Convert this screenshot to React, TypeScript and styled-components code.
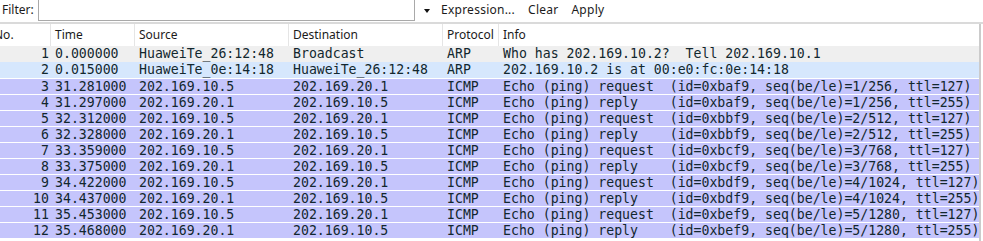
import React from "react";
import styled, { createGlobalStyle } from "styled-components";

const Global = createGlobalStyle`
  html, body { margin: 0; padding: 0; background: #ffffff; }
  body { width: 983px; height: 241px; overflow: hidden; }
`;

const Page = styled.div`
  width: 983px;
  height: 241px;
  overflow: hidden;
  background: #fff;
  font-family: "Noto Sans", "Open Sans", sans-serif;
`;

const Toolbar = styled.div`
  height: 22px;
  display: flex;
  align-items: flex-start;
  border-bottom: 2px solid #dadada;
  font-size: 12px;
  color: #1b1b1b;
`;

const Label = styled.span`
  margin-left: 2px;
  line-height: 19px;
  width: 36px;
`;

const FilterInput = styled.div`
  width: 375px;
  height: 20px;
  border: 1px solid #a9a9a9;
  border-top: none;
  background: #fff;
`;

const Arrow = styled.span`
  margin: 9px 0 0 9px;
  width: 0;
  height: 0;
  border-left: 3.5px solid transparent;
  border-right: 3.5px solid transparent;
  border-top: 4px solid #111;
`;

const ToolButton = styled.span<{ $ml: number }>`
  margin-left: ${(p) => p.$ml}px;
  line-height: 19px;
  letter-spacing: 0.25px;
`;

const Table = styled.div`
  width: 979px;
  border-right: 2px solid #cbcbcb;
  height: 217px;
  overflow: hidden;
`;

const cols = "51px 84px 154px 154px 56px 480px";

const HeaderRow = styled.div`
  display: grid;
  grid-template-columns: ${cols};
  height: 22px;
  background: #fff;
`;

const HeaderCell = styled.div`
  border-right: 1px solid #e5e5e5;
  padding-left: 4px;
  font-size: 12px;
  line-height: 21px;
  color: #1b1b1b;
  white-space: nowrap;
  &:first-child { padding-left: 0; text-indent: -6px; }
  &:last-child { border-right: none; }
`;

const Row = styled.div<{ $bg: string; $sep: boolean }>`
  display: grid;
  grid-template-columns: ${cols};
  height: ${(p) => (p.$sep ? 15 : 16)}px;
  background: ${(p) => p.$bg};
  border-top: ${(p) => (p.$sep ? "1px solid #fff" : "none")};
  font-family: "DejaVu Sans Mono", "Liberation Mono", monospace;
  font-size: 13.2px;
  line-height: ${(p) => (p.$sep ? 15 : 16)}px;
  color: #12272e;
  white-space: pre;
`;

const Cell = styled.div<{ $right?: boolean }>`
  overflow: hidden;
  padding-left: ${(p) => (p.$right ? 0 : 4)}px;
  padding-right: ${(p) => (p.$right ? 2 : 0)}px;
  text-align: ${(p) => (p.$right ? "right" : "left")};
`;

type Pkt = [string, string, string, string, string, string];

const packets: Pkt[] = [
  ["1", "0.000000", "HuaweiTe_26:12:48", "Broadcast", "ARP", "Who has 202.169.10.2?  Tell 202.169.10.1"],
  ["2", "0.015000", "HuaweiTe_0e:14:18", "HuaweiTe_26:12:48", "ARP", "202.169.10.2 is at 00:e0:fc:0e:14:18"],
  ["3", "31.281000", "202.169.10.5", "202.169.20.1", "ICMP", "Echo (ping) request  (id=0xbaf9, seq(be/le)=1/256, ttl=127)"],
  ["4", "31.297000", "202.169.20.1", "202.169.10.5", "ICMP", "Echo (ping) reply    (id=0xbaf9, seq(be/le)=1/256, ttl=255)"],
  ["5", "32.312000", "202.169.10.5", "202.169.20.1", "ICMP", "Echo (ping) request  (id=0xbbf9, seq(be/le)=2/512, ttl=127)"],
  ["6", "32.328000", "202.169.20.1", "202.169.10.5", "ICMP", "Echo (ping) reply    (id=0xbbf9, seq(be/le)=2/512, ttl=255)"],
  ["7", "33.359000", "202.169.10.5", "202.169.20.1", "ICMP", "Echo (ping) request  (id=0xbcf9, seq(be/le)=3/768, ttl=127)"],
  ["8", "33.375000", "202.169.20.1", "202.169.10.5", "ICMP", "Echo (ping) reply    (id=0xbcf9, seq(be/le)=3/768, ttl=255)"],
  ["9", "34.422000", "202.169.10.5", "202.169.20.1", "ICMP", "Echo (ping) request  (id=0xbdf9, seq(be/le)=4/1024, ttl=127)"],
  ["10", "34.437000", "202.169.20.1", "202.169.10.5", "ICMP", "Echo (ping) reply    (id=0xbdf9, seq(be/le)=4/1024, ttl=255)"],
  ["11", "35.453000", "202.169.10.5", "202.169.20.1", "ICMP", "Echo (ping) request  (id=0xbef9, seq(be/le)=5/1280, ttl=127)"],
  ["12", "35.468000", "202.169.20.1", "202.169.10.5", "ICMP", "Echo (ping) reply    (id=0xbef9, seq(be/le)=5/1280, ttl=255)"],
];

const bgFor = (i: number) => (i === 0 ? "#efefef" : i === 1 ? "#d6e7fd" : "#c5c5fc");

export default function App() {
  return (
    <Page>
      <Global />
      <Toolbar>
        <Label>Filter:</Label>
        <FilterInput />
        <Arrow />
        <ToolButton $ml={11}>Expression...</ToolButton>
        <ToolButton $ml={13}>Clear</ToolButton>
        <ToolButton $ml={13}>Apply</ToolButton>
      </Toolbar>
      <Table>
        <HeaderRow>
          <HeaderCell>No.</HeaderCell>
          <HeaderCell>Time</HeaderCell>
          <HeaderCell>Source</HeaderCell>
          <HeaderCell>Destination</HeaderCell>
          <HeaderCell>Protocol</HeaderCell>
          <HeaderCell>Info</HeaderCell>
        </HeaderRow>
        {packets.map((p, i) => (
          <Row key={p[0]} $bg={bgFor(i)} $sep={i >= 2}>
            <Cell $right>{p[0]}</Cell>
            <Cell>{p[1]}</Cell>
            <Cell>{p[2]}</Cell>
            <Cell>{p[3]}</Cell>
            <Cell>{p[4]}</Cell>
            <Cell>{p[5]}</Cell>
          </Row>
        ))}
      </Table>
    </Page>
  );
}
